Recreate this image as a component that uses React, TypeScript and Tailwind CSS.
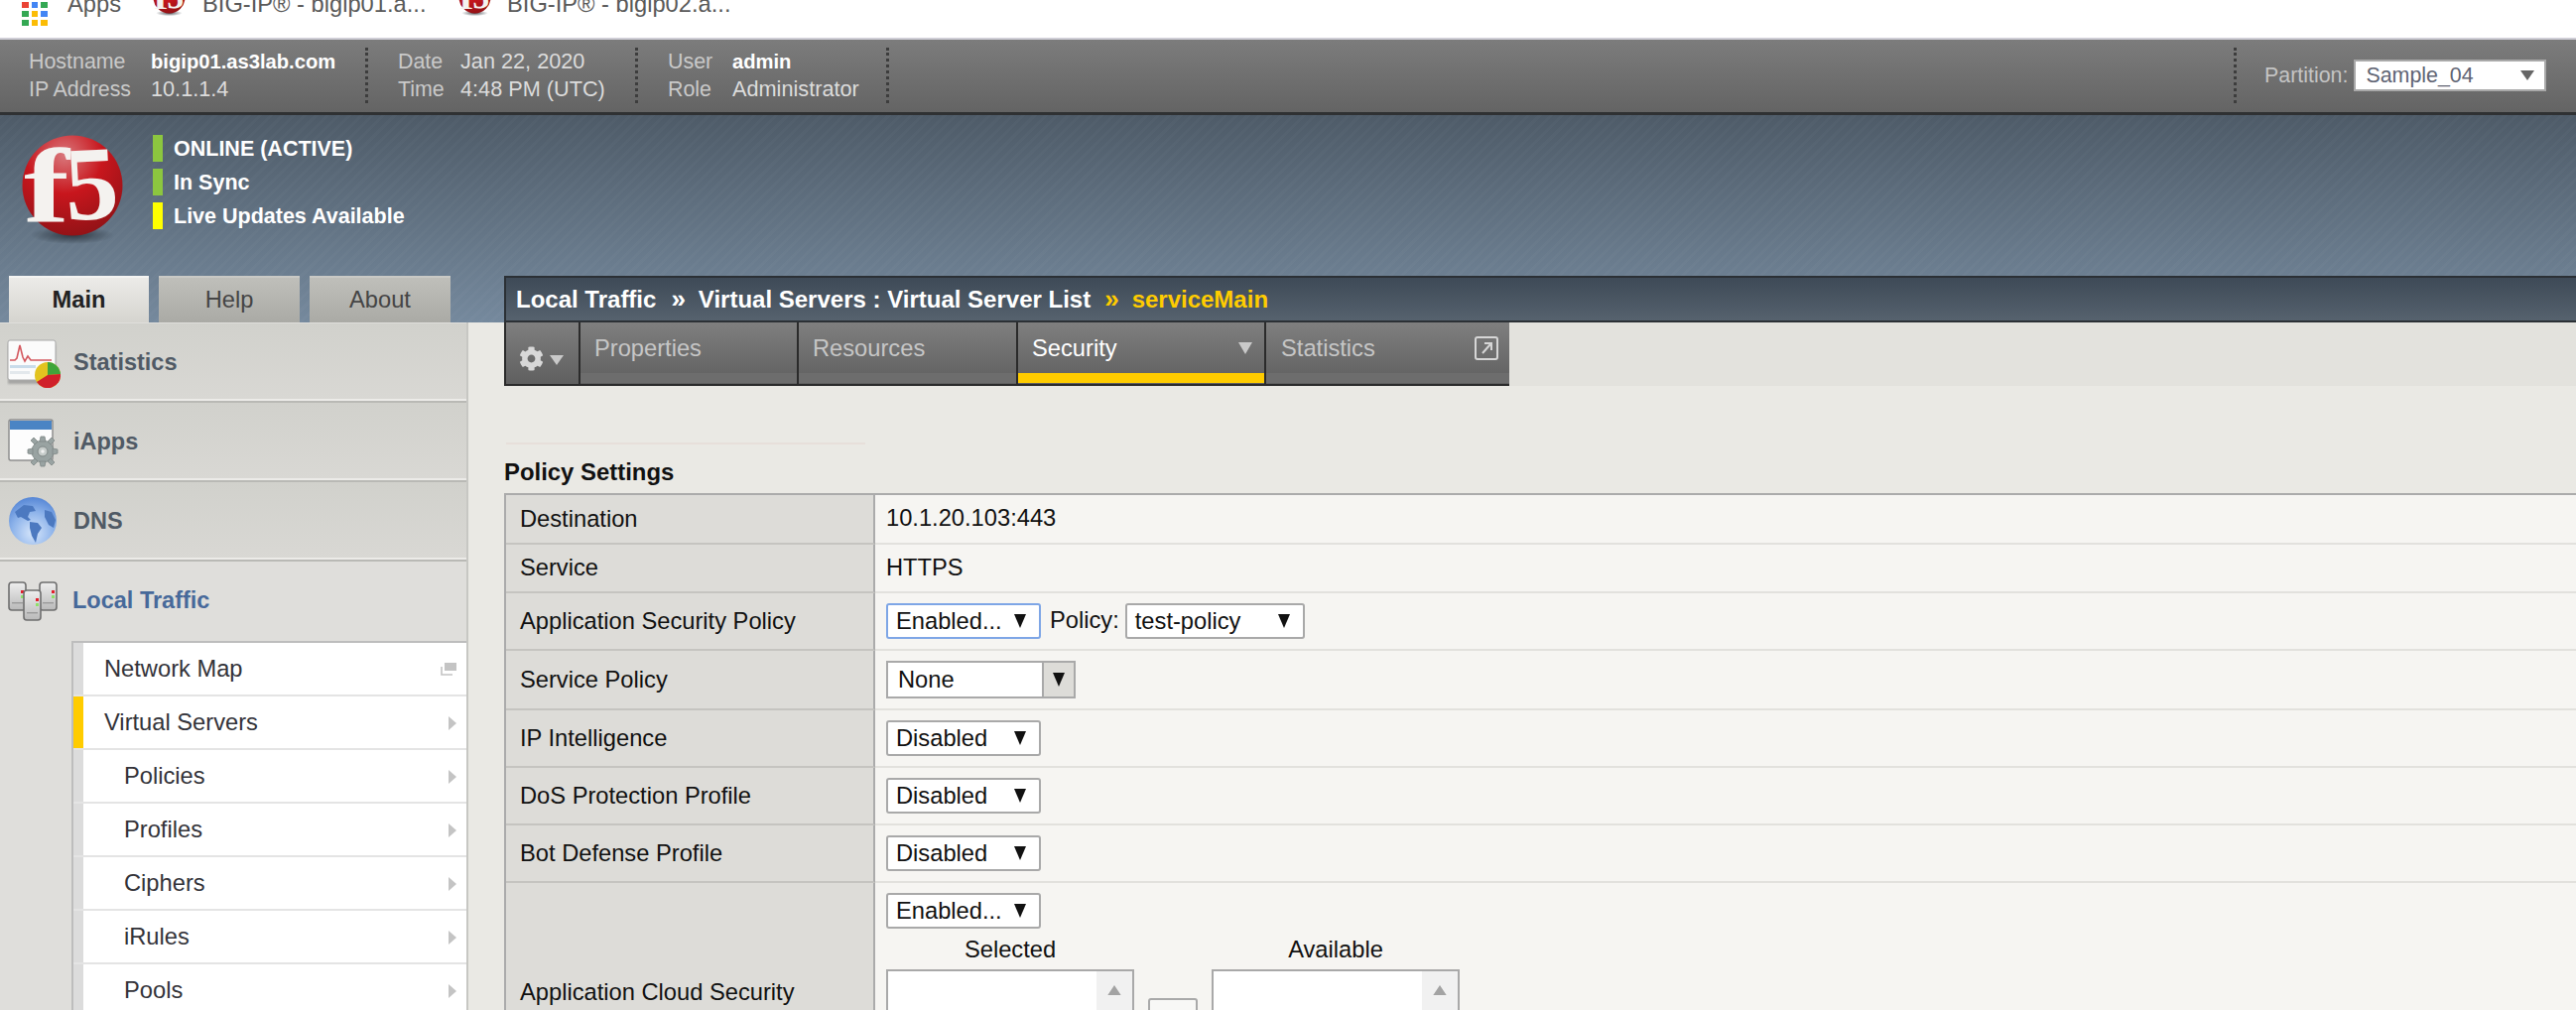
import React from "react";
import { FaCog } from "react-icons/fa";

const SANS = "font-['Liberation_Sans',Arial,sans-serif]";

function F5Logo({ className, id }: { className: string; id: string }) {
  return (
    <svg viewBox="0 0 104 112" className={className}>
      <defs>
        <radialGradient id={id} cx="0.42" cy="0.2" r="0.85">
          <stop offset="0" stopColor="#d9787c" />
          <stop offset="0.45" stopColor="#c8161d" />
          <stop offset="1" stopColor="#8e1216" />
        </radialGradient>
        <radialGradient id={id + "s"} cx="0.5" cy="0.5" r="0.5">
          <stop offset="0" stopColor="#1c242c" stopOpacity="0.75" />
          <stop offset="1" stopColor="#1c242c" stopOpacity="0" />
        </radialGradient>
      </defs>
      <ellipse cx="52" cy="101" rx="42" ry="9" fill={`url(#${id}s)`} />
      <circle cx="52" cy="51" r="50.5" fill={`url(#${id})`} />
      <g fontFamily="'Liberation Serif', serif" fontWeight="700" fontSize="106" fill="#f4f2ef">
        <text transform="translate(3 87) scale(1.3 1)">f</text>
        <text transform="translate(46 86) rotate(-3) scale(1.02 1)">5</text>
      </g>
    </svg>
  );
}

function AppsGrid() {
  const c = ["#ea4335", "#4285f4", "#34a853", "#34a853", "#fbbc05", "#4285f4", "#34a853", "#fbbc05", "#fbbc05"];
  return (
    <div className="grid grid-cols-3 gap-[3px] w-[26px] shrink-0 mt-[-12px]">
      {c.map((v, i) => (
        <div key={i} className="h-[6px]" style={{ background: v }} />
      ))}
    </div>
  );
}

function Bookmarks() {
  return (
    <div className={`h-[38px] bg-white overflow-hidden flex items-start text-[23.7px] text-[#5a5a5a] leading-none ${SANS}`}>
      <div className="flex items-start pl-[22px] pt-[2px] w-[154px]">
        <div className="pt-[12px]"><AppsGrid /></div>
        <span className="ml-[20px] mt-[-9px]">Apps</span>
      </div>
      <div className="flex items-start w-[308px]">
        <F5Logo id="fa" className="w-[33px] h-[36px] mt-[-19px] shrink-0" />
        <span className="ml-[17px] mt-[-7px] whitespace-nowrap">BIG-IP® - bigip01.a...</span>
      </div>
      <div className="flex items-start">
        <F5Logo id="fb" className="w-[33px] h-[36px] mt-[-19px] shrink-0" />
        <span className="ml-[16px] mt-[-7px] whitespace-nowrap">BIG-IP® - bigip02.a...</span>
      </div>
    </div>
  );
}

function InfoGroup({
  className,
  labelW,
  rows,
}: {
  className: string;
  labelW: string;
  rows: [string, string, boolean][];
}) {
  return (
    <div className={`h-[56px] border-r-[3px] border-dotted border-[#3d3d3d] shrink-0 ${className}`}>
      {rows.map(([l, v, b]) => (
        <div key={l} className="flex h-[28px] items-center whitespace-nowrap">
          <span className={`text-[#c9c9c9] ${labelW}`}>{l}</span>
          <span className={b ? "text-white font-bold text-[20.2px]" : "text-[#dcdcdc] text-[21.7px]"}>{v}</span>
        </div>
      ))}
    </div>
  );
}

function TopBar() {
  return (
    <div className={`h-[78px] border-t-2 border-t-[#cfced6] border-b-[3px] border-b-[#2f3133] bg-linear-to-b from-[#7c7c7c] to-[#646464] flex pt-[8px] text-[21.4px] ${SANS}`}>
      <InfoGroup
        className="w-[371px] pl-[29px]"
        labelW="w-[123px]"
        rows={[
          ["Hostname", "bigip01.as3lab.com", true],
          ["IP Address", "10.1.1.4", false],
        ]}
      />
      <InfoGroup
        className="w-[272px] pl-[30px]"
        labelW="w-[63px]"
        rows={[
          ["Date", "Jan 22, 2020", false],
          ["Time", "4:48 PM (UTC)", false],
        ]}
      />
      <InfoGroup
        className="w-[253px] pl-[30px]"
        labelW="w-[65px]"
        rows={[
          ["User", "admin", true],
          ["Role", "Administrator", false],
        ]}
      />
      <div className="ml-auto w-[345px] h-[56px] border-l-[3px] border-dotted border-[#3d3d3d] pl-[28px] flex items-center">
        <span className="text-[#c4c4c4]">Partition:</span>
        <div className="ml-[6px] w-[194px] h-[32px] bg-white border-2 border-[#a9a9a9] flex items-center pl-[10px] pr-[9px] text-[#5f6473]">
          <span className="flex-1">Sample_04</span>
          <svg viewBox="0 0 16 12" className="w-[16px] h-[12px]">
            <path d="M1 1h14l-7 10z" fill="#666" />
          </svg>
        </div>
      </div>
    </div>
  );
}

function Banner() {
  const status: [string, string][] = [
    ["#8cc63f", "ONLINE (ACTIVE)"],
    ["#8cc63f", "In Sync"],
    ["#ffff00", "Live Updates Available"],
  ];
  return (
    <div className={`h-[209px] flex flex-col ${SANS} bg-[repeating-linear-gradient(135deg,rgba(255,255,255,0.018)_0,rgba(255,255,255,0.018)_3px,transparent_3px,transparent_8px),linear-gradient(to_bottom,#4e5b68,#75899d)]`}>
      <div className="flex pt-[20px] h-[162px]">
        <F5Logo id="fm" className="ml-[21px] w-[104px] h-[112px] shrink-0" />
        <div className="ml-[29px] flex flex-col gap-[7px]">
          {status.map(([c, t]) => (
            <div key={t} className="flex items-center h-[27px]">
              <div className="w-[10px] h-[27px]" style={{ background: c }} />
              <span className="ml-[11px] mt-[2px] text-white font-bold text-[21.5px] whitespace-nowrap">{t}</span>
            </div>
          ))}
        </div>
      </div>
      <div className="flex h-[47px] text-[23.7px]">
        <div className="w-[508px] flex pl-[9px] shrink-0 gap-[10px]">
          <div className="w-[141px] h-[47px] flex items-center justify-center font-bold text-[#222] bg-linear-to-b from-[#ecebe8] to-[#d5d4cf] border-t-2 border-t-[#f4f4f2]">
            Main
          </div>
          <div className="w-[142px] h-[47px] flex items-center justify-center text-[#454545] bg-linear-to-b from-[#bfbfba] to-[#aaaaa5] border-t-2 border-t-[#c9c9c5]">
            Help
          </div>
          <div className="w-[142px] h-[47px] flex items-center justify-center text-[#454545] bg-linear-to-b from-[#bfbfba] to-[#aaaaa5] border-t-2 border-t-[#c9c9c5]">
            About
          </div>
        </div>
        <div className="flex-1 border-2 border-[#2b3035] border-r-0 bg-linear-to-b from-[#3e4a57] to-[#56626e] flex items-center pl-[10px] font-bold text-white whitespace-nowrap text-[24px]">
          <span>Local Traffic</span>
          <span className="ml-[15px] mr-[13px] text-[26px]">»</span>
          <span>Virtual Servers : Virtual Server List</span>
          <span className="ml-[14px] mr-[13px] text-[26px] text-[#ffcc00]">»</span>
          <span className="text-[#ffcc00]">serviceMain</span>
        </div>
      </div>
    </div>
  );
}

function StatsIcon() {
  return (
    <svg viewBox="0 0 54 50" className="w-[54px] h-[50px]">
      <defs>
        <filter id="sh1"><feGaussianBlur stdDeviation="1.2" /></filter>
      </defs>
      <rect x="1" y="6" width="48" height="40" fill="#777" opacity=".5" filter="url(#sh1)" />
      <rect x="1" y="2" width="48" height="40" rx="2" fill="#fbfbfb" stroke="#a9a9a9" />
      <path d="M3 22h5l2-2 3-13 3 12 2 4 3-5 3 4h21" fill="none" stroke="#d4585f" strokeWidth="1.6" />
      <rect x="3" y="27" width="26" height="3" fill="#c9dcea" />
      <rect x="3" y="33" width="20" height="3" fill="#e3e8ec" />
      <circle cx="41" cy="37" r="13" fill="#e3c31f" />
      <path d="M41 37V24a13 13 0 0 1 13 12z" fill="#3fa53a" />
      <path d="M41 37l13-1a13 13 0 0 1-24 8z" fill="#d0202a" />
    </svg>
  );
}

function AppsIcon() {
  return (
    <svg viewBox="0 0 52 50" className="w-[52px] h-[50px]">
      <rect x="2" y="2" width="44" height="41" rx="2" fill="#fdfdfd" stroke="#8e8e8e" strokeWidth="1.5" />
      <rect x="3" y="3" width="42" height="9" fill="#4a84c4" />
      <g fill="#99a3a2" stroke="#7d8685" strokeWidth="0.8">
        <circle cx="36" cy="34" r="11" />
        <path d="M34 19h4l1 5h-6zM34 49h4l1-5h-6zM21 32v4l5 1v-6zM51 32v4l-5 1v-6zM24 23l3-3 4 4-3 3zM48 45l-3 3-4-4 3-3zM48 23l-3-3-4 4 3 3zM24 45l3 3 4-4-3-3z" />
      </g>
      <circle cx="36" cy="34" r="5" fill="#c6ccca" stroke="#7d8685" />
      <circle cx="36" cy="34" r="1.8" fill="#f1f1f1" />
    </svg>
  );
}

function GlobeIcon() {
  return (
    <svg viewBox="0 0 52 52" className="w-[52px] h-[52px]">
      <defs>
        <radialGradient id="gl" cx="0.5" cy="0.75" r="0.8">
          <stop offset="0" stopColor="#d6e6fb" />
          <stop offset="0.55" stopColor="#8db3ea" />
          <stop offset="1" stopColor="#4d7fd2" />
        </radialGradient>
      </defs>
      <circle cx="26" cy="25" r="24" fill="url(#gl)" />
      <path d="M8 16l9-7 9 1 3 5-6 1-2 5 3 3-3 1-7-4-3 1zM23 26l8 1 4 5-4 6-2 9-4-7-2-8zM38 14l7 2 4 8-2 8-5-3-4-8z" fill="#4c79c0" />
    </svg>
  );
}

function ServersIcon() {
  const S = ({ x, y, h }: { x: number; y: number; h: number }) => (
    <g>
      <rect x={x} y={y} width="17" height={h} rx="3" fill="url(#srv)" stroke="#6f6f6f" strokeWidth="1.6" />
      <rect x={x + 12} y={y + 8} width="3" height="3" fill="#e2202c" />
      <rect x={x + 12} y={y + 13} width="3" height="3" fill="#8fe06a" />
      <rect x={x + 3} y={y + h - 8} width="11" height="1.4" fill="#9a9a9a" />
    </g>
  );
  return (
    <svg viewBox="0 0 50 40" className="w-[50px] h-[40px]">
      <defs>
        <linearGradient id="srv" x1="0" y1="0" x2="0" y2="1">
          <stop offset="0" stopColor="#eeeeee" />
          <stop offset="1" stopColor="#b9b9b9" />
        </linearGradient>
      </defs>
      <S x={1} y={1} h={28} />
      <S x={32} y={1} h={28} />
      <S x={16} y={9} h={30} />
    </svg>
  );
}

function SideRow({ icon, label }: { icon: React.ReactNode; label: string }) {
  return (
    <div className="h-[80px] flex items-center border-b-2 border-b-[#b9b9b5] shadow-[inset_0_-2px_0_#ecebe8] bg-linear-to-b from-[#d1d1cc] to-[#d9d8d4] pt-[1px]">
      <div className="w-[74px] pl-[7px] shrink-0">{icon}</div>
      <span className="font-bold text-[23.5px] text-[#505a65]">{label}</span>
    </div>
  );
}

function NavItem({ label, sub, active, ext }: { label: string; sub?: boolean; active?: boolean; ext?: boolean }) {
  return (
    <div className="h-[54px] flex border-b-2 border-b-[#e4e4e4]">
      <div className={`w-[10px] shrink-0 ${active ? "bg-[#ffcc00]" : "bg-[#dcdcdc]"}`} />
      <div className={`flex-1 bg-white flex items-center text-[#333339] ${sub ? "pl-[41px]" : "pl-[21px]"} pr-[10px]`}>
        <span className="flex-1 mt-[1px]">{label}</span>
        {ext ? (
          <svg viewBox="0 0 16 13" className="w-[16px] h-[13px]">
            <path d="M4 0h12v8H4z" fill="#c4c4c4" />
            <path d="M1 4v8h11" fill="none" stroke="#c4c4c4" strokeWidth="1.6" />
          </svg>
        ) : (
          <svg viewBox="0 0 8 14" className="w-[8px] h-[14px] mt-[2px]">
            <path d="M0 0l8 7-8 7z" fill="#c4c4c4" />
          </svg>
        )}
      </div>
    </div>
  );
}

function Sidebar() {
  return (
    <div className="w-[472px] shrink-0 border-r-2 border-r-[#c7c7c3] pt-[1px] bg-[#dfdedb] text-[23.7px]">
      <SideRow icon={<StatsIcon />} label="Statistics" />
      <SideRow icon={<AppsIcon />} label="iApps" />
      <SideRow icon={<GlobeIcon />} label="DNS" />
      <div className="h-[80px] flex items-center">
        <div className="w-[73px] pl-[8px] shrink-0"><ServersIcon /></div>
        <span className="font-bold text-[23.5px] text-[#47699a]">Local Traffic</span>
      </div>
      <div className="ml-[72px] border-l-2 border-t-2 border-[#bdbdbd]">
        <NavItem label="Network Map" ext />
        <NavItem label="Virtual Servers" active />
        <NavItem label="Policies" sub />
        <NavItem label="Profiles" sub />
        <NavItem label="Ciphers" sub />
        <NavItem label="iRules" sub />
        <NavItem label="Pools" sub />
      </div>
    </div>
  );
}

function TabCell({
  label,
  className,
  active,
  right,
}: {
  label: string;
  className: string;
  active?: boolean;
  right?: React.ReactNode;
}) {
  return (
    <div className={`flex flex-col border-r-2 border-r-[#2b2b2b] ${className}`}>
      <div className={`h-[51px] flex items-center pl-[14px] pr-[12px] ${active ? "text-white" : "text-[#c6c6c6]"}`}>
        <span className="flex-1 mt-[2px]">{label}</span>
        {right}
      </div>
      <div className={`h-[10px] ${active ? "bg-[#ffcc00]" : "bg-[#6d6d6d]"}`} />
    </div>
  );
}

function Tabs() {
  return (
    <div className="bg-[#e3e2dd] h-[64px]">
      <div className="w-[1013px] h-[64px] flex border-l-2 border-b-2 border-[#2b2b2b] bg-linear-to-b from-[#7f7f7f] to-[#5f5f5f] text-[23.7px]">
        <div className="w-[75px] border-r-2 border-r-[#2b2b2b] flex items-center pl-[13px] pt-[10px] shrink-0">
          <FaCog className="w-[25px] h-[25px] text-[#d8d8d8]" />
          <svg viewBox="0 0 14 10" className="w-[14px] h-[10px] ml-[6px] mt-[3px]">
            <path d="M0 0h14l-7 10z" fill="#c9c9c9" />
          </svg>
        </div>
        <TabCell label="Properties" className="w-[220px]" />
        <TabCell label="Resources" className="w-[221px]" />
        <TabCell
          label="Security"
          className="w-[250px]"
          active
          right={
            <svg viewBox="0 0 14 12" className="w-[14px] h-[12px]">
              <path d="M0 0h14l-7 12z" fill="#c9c9c9" />
            </svg>
          }
        />
        <div className="flex-1 h-[62px] flex flex-col">
          <div className="h-[51px] flex items-center pl-[15px] pr-[11px] text-[#c6c6c6]">
            <span className="flex-1 mt-[2px]">Statistics</span>
            <svg viewBox="0 0 24 24" className="w-[24px] h-[24px]">
              <rect x="1" y="1" width="22" height="22" rx="2" fill="none" stroke="#d6d6d6" strokeWidth="2" />
              <path d="M8 17l8-9M10 7h7v7" fill="none" stroke="#d6d6d6" strokeWidth="2" />
            </svg>
          </div>
          <div className="h-[10px] bg-[#6d6d6d]" />
        </div>
      </div>
    </div>
  );
}

function Sel({ label, w = "w-[156px]", focus }: { label: string; w?: string; focus?: boolean }) {
  return (
    <div
      className={`${w} h-[36px] bg-white rounded-[3px] flex items-center pl-[8px] pr-[13px] shrink-0 border-2 ${
        focus ? "border-[#7ea6e6]" : "border-[#a9a9a9]"
      }`}
    >
      <span className="flex-1 text-[#111] mt-[1px]">{label}</span>
      <svg viewBox="0 0 12 14" className="w-[12px] h-[14px]">
        <path d="M0 0h12l-6 14z" fill="#111" />
      </svg>
    </div>
  );
}

function Row({
  h,
  label,
  children,
  tall,
}: {
  h: string;
  label: string;
  children: React.ReactNode;
  tall?: boolean;
}) {
  return (
    <div className={`flex ${h}`}>
      <div className={`w-[372px] shrink-0 bg-[#dddcd8] border-b-2 border-b-[#c5c4c0] border-r-2 border-r-[#ababab] pl-[14px] text-[#111] ${tall ? "flex items-end pb-[87px]" : "flex items-center pt-[1px]"}`}>
        {label}
      </div>
      <div className={`flex-1 border-b-2 border-b-[#e2e1dd] pl-[11px] flex ${tall ? "flex-col pt-[10px]" : "items-center"} text-[#111]`}>
        {children}
      </div>
    </div>
  );
}

function ListBox({ title }: { title: string }) {
  return (
    <div className="w-[250px] shrink-0 flex flex-col">
      <div className="h-[40px] flex items-center justify-center text-[#111] pt-[2px]">{title}</div>
      <div className="h-[120px] border-2 border-[#a9a9a9] bg-white flex justify-end">
        <div className="w-[36px] bg-[#f1f1f1] flex justify-center pt-[14px]">
          <svg viewBox="0 0 12 9" className="w-[14px] h-[10px]">
            <path d="M6 0l6 9H0z" fill="#a3a3a3" />
          </svg>
        </div>
      </div>
    </div>
  );
}

function Content() {
  return (
    <div className="flex-1 min-w-0 bg-[#eae9e4] pl-[36px] text-[23.7px]">
      <Tabs />
      <div className="h-[59px] pt-[57px]">
        <div className="ml-[2px] w-[362px] h-[2px] bg-[#e7dfda]" />
      </div>
      <div className="h-[49px] flex items-center font-bold text-[#111] pt-[7px] text-[23.9px]">Policy Settings</div>
      <div className="border-t-[2px] border-t-[#ababab] border-l-2 border-l-[#ababab] bg-[#f6f5f2]">
        <Row h="h-[50px]" label="Destination"><span>10.1.20.103:443</span></Row>
        <Row h="h-[49px]" label="Service"><span>HTTPS</span></Row>
        <Row h="h-[58px]" label="Application Security Policy">
          <Sel label="Enabled..." focus />
          <span className="ml-[9px]">Policy:</span>
          <div className="ml-[6px]"><Sel label="test-policy" w="w-[181px]" /></div>
        </Row>
        <Row h="h-[60px]" label="Service Policy">
          <div className="w-[191px] h-[38px] flex border-2 border-[#a9a9a9] shrink-0">
            <div className="flex-1 bg-white flex items-center pl-[10px] pt-[2px]">None</div>
            <div className="w-[32px] bg-[#dddcd8] border-l-2 border-l-[#a9a9a9] flex items-center justify-center">
              <svg viewBox="0 0 12 14" className="w-[12px] h-[14px]">
                <path d="M0 0h12l-6 14z" fill="#111" />
              </svg>
            </div>
          </div>
        </Row>
        <Row h="h-[58px]" label="IP Intelligence"><Sel label="Disabled" /></Row>
        <Row h="h-[58px]" label="DoS Protection Profile"><Sel label="Disabled" /></Row>
        <Row h="h-[58px]" label="Bot Defense Profile"><Sel label="Disabled" /></Row>
        <Row h="h-[218px]" label="Application Cloud Security" tall>
          <Sel label="Enabled..." />
          <div className="flex mt-[1px]">
            <ListBox title="Selected" />
            <div className="w-[50px] h-[40px] mt-[69px] mx-[14px] border-2 border-[#a9a9a9] rounded-[3px] bg-[#f8f8f6]" />
            <ListBox title="Available" />
          </div>
        </Row>
      </div>
    </div>
  );
}

export default function App() {
  return (
    <div className={`w-[2596px] h-[1018px] overflow-hidden bg-[#eae9e4] ${SANS}`}>
      <Bookmarks />
      <TopBar />
      <Banner />
      <div className="flex h-[693px] overflow-hidden">
        <Sidebar />
        <Content />
      </div>
    </div>
  );
}
